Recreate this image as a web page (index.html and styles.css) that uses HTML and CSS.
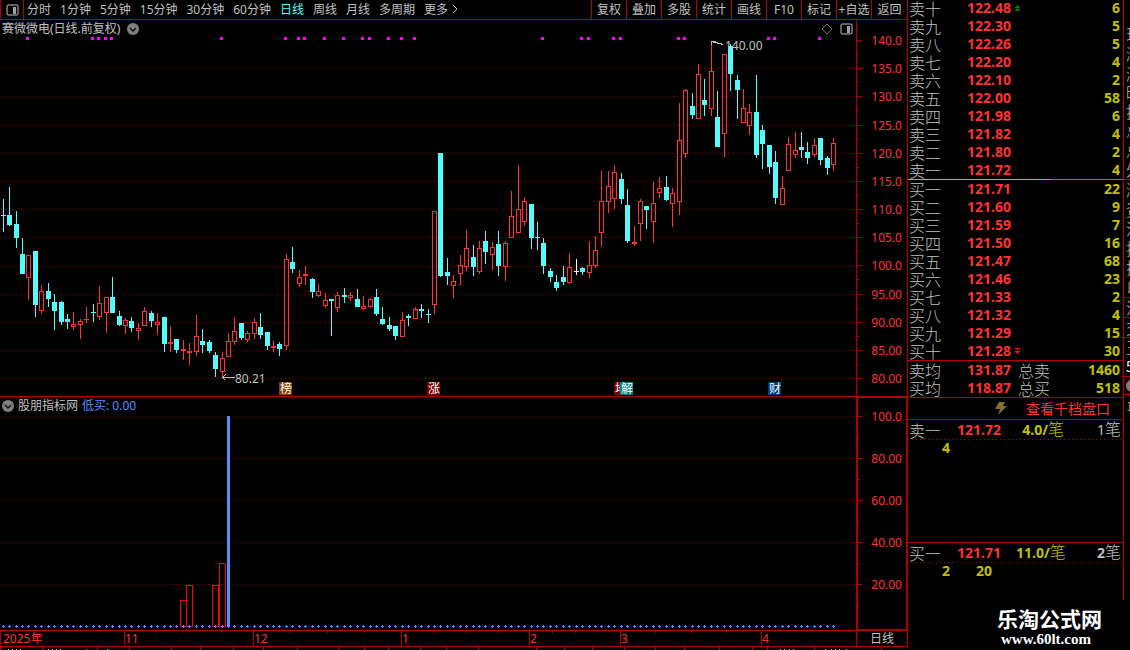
FILE: index.html
```html
<!DOCTYPE html>
<html lang="zh-CN">
<head>
<meta charset="UTF-8">
<meta name="viewport" content="width=device-width, initial-scale=1.0">
<title>赛微微电</title>
<link rel="stylesheet" href="styles.css">
</head>
<body>

<main class="main">
    <nav class="toolbar">
        <button class="panel-toggle" aria-label="侧栏">
            <svg width="13" height="12"><rect x="1" y="1" width="11" height="10" rx="2" fill="none" stroke="#808080" stroke-width="1.5"/><rect x="7" y="3" width="3" height="7" fill="#a0a0a0"/></svg>
        </button>
        <div class="periods">
            <button>分时</button>
            <button>1分钟</button>
            <button>5分钟</button>
            <button>15分钟</button>
            <button>30分钟</button>
            <button>60分钟</button>
            <button class="active">日线</button>
            <button>周线</button>
            <button>月线</button>
            <button>多周期</button>
            <button>更多 <svg width="8" height="10"><path d="M2 1l4 4-4 4" fill="none" stroke="#c0c0c0"/></svg></button>
        </div>
        <div class="tools">
            <button>复权</button>
            <button>叠加</button>
            <button>多股</button>
            <button>统计</button>
            <button>画线</button>
            <button>F10</button>
            <button>标记</button>
            <button>+自选</button>
            <button>返回</button>
        </div>
    </nav>

    <section class="pane">
        <div class="plot">
            <div class="pane-title">
                <span>赛微微电(日线.前复权)</span>
                <svg width="12" height="12"><circle cx="6" cy="6" r="6" fill="#808080"/><path d="M3 5l3 3 3-3" fill="none" stroke="#111" stroke-width="1.5"/></svg>
                <span class="spacer"></span>
                <svg width="12" height="12"><path d="M6 1l5 5-5 5-5-5z" fill="none" stroke="#707070"/></svg>
                <svg width="13" height="12"><rect x="1" y="1" width="11" height="10" rx="2" fill="none" stroke="#808080" stroke-width="1.5"/><rect x="7" y="3" width="3" height="7" fill="#a0a0a0"/></svg>
            </div>
            <svg id="kline" class="kline"></svg>
        </div>
        <svg id="price-axis" class="axis"></svg>
    </section>

    <section class="pane">
        <div class="plot">
            <div class="pane-title compact">
                <svg width="12" height="12"><circle cx="6" cy="6" r="6" fill="#808080"/><path d="M3 5l3 3 3-3" fill="none" stroke="#111" stroke-width="1.5"/></svg>
                <span>股朋指标网</span>
                <span class="blue">低买: 0.00</span>
            </div>
            <svg id="indicator" class="indicator"></svg>
        </div>
        <svg id="indicator-axis" class="axis axis-selected"></svg>
    </section>

    <footer class="timeline">
        <svg id="months" class="months"></svg>
        <div class="period-name">日线</div>
    </footer>
    <svg id="ruler" class="ruler"></svg>
</main>

<aside class="quotes">
    <table class="levels sell"><tbody id="sell"></tbody></table>
    <div class="ratio"><span class="ratio-sell"></span><span class="ratio-buy"></span></div>
    <table class="levels buy"><tbody id="buy"></tbody></table>
    <table class="levels totals">
        <tbody>
            <tr><th>卖均</th><td class="price">131.87</td><th>总卖</th><td class="volume">1460</td></tr>
            <tr><th>买均</th><td class="price">118.87</td><th>总买</th><td class="volume">518</td></tr>
        </tbody>
    </table>
    <div class="depth">
        <svg width="12" height="13"><path d="M4 0h6L8 4h4L3 13l2-6H0z" fill="#80702c"/></svg>
        <a href="#">查看千档盘口</a>
    </div>
    <section class="queue">
        <table class="levels">
            <tbody><tr><th>卖一</th><td class="price">121.72</td><td class="per">4.0/<span>笔</span></td><td class="count">1<span>笔</span></td></tr></tbody>
        </table>
        <div class="orders"><span>4</span></div>
    </section>
    <section class="queue last">
        <table class="levels">
            <tbody><tr><th>买一</th><td class="price">121.71</td><td class="per">11.0/<span>笔</span></td><td class="count"><b>2</b><span>笔</span></td></tr></tbody>
        </table>
        <div class="orders"><span>2</span><span>20</span></div>
    </section>
    <div class="site">
        <strong>乐淘公式网</strong>
        <span>www.60lt.com</span>
    </div>
</aside>

<aside class="strip">
    <div class="group first"><span>现</span><span>涨</span><span>涨</span><span>昨</span><span>换</span><span>总</span><span>总</span><span>外</span></div>
    <div class="group"><span>涨</span><span>资</span><span>流</span><span>换</span><span>换</span><span>以</span></div>
    <div class="group"><span>流</span></div>
    <div class="group"><span>交</span></div>
    <div class="group"><span>王</span><b>5</b></div>
    <div class="group dark"><svg width="12" height="12"><circle cx="6" cy="6" r="6" fill="#808080"/></svg></div>
    <div class="group end"><i>1</i></div>
</aside>

<script src="chart.js"></script>
</body>
</html>
```
FILE: styles.css
```css
* {
    box-sizing: border-box;
}

body {
    margin: 0;
    height: 100vh;
    display: flex;
    overflow: hidden;
    background-color: #000;
    color: #c0c0c0;
    font-family: "Noto Sans", "Noto Sans CJK SC", sans-serif;
    font-size: 12px;
}

svg {
    display: block;
    shape-rendering: crispEdges;
}

svg text {
    font-size: 12px;
    fill: #ff3232;
}

button {
    padding: 0;
    border: 0;
    background: none;
    color: inherit;
    font: inherit;
    line-height: 18px;
    white-space: nowrap;
    cursor: pointer;
}

button svg, .pane-title svg, .strip svg {
    shape-rendering: auto;
}

table {
    width: 100%;
    border-collapse: collapse;
    table-layout: fixed;
}

.main {
    flex: 1;
    min-width: 0;
}

/* toolbar */
.toolbar {
    display: flex;
    height: 20px;
    border-bottom: 1px solid #b00000;
    border-right: 1px solid #b00000;
}

.panel-toggle {
    display: flex;
    align-items: center;
    justify-content: center;
    width: 24px;
    border-left: 1px solid #b00000;
    border-right: 1px solid #b00000;
}

.periods {
    display: flex;
    flex: 1;
    gap: 9px;
    padding-left: 3px;
}

.periods svg {
    display: inline-block;
}

.active {
    color: #54fcfc;
}

.tools {
    display: flex;
}

.tools button {
    width: 35px;
    border-left: 1px solid #b00000;
}

.tools button:last-child {
    width: 36px;
}

/* charts */
.pane {
    display: flex;
}

.plot {
    flex: 1;
    min-width: 0;
    border-bottom: 1px solid #b00000;
}

.pane-title {
    display: flex;
    align-items: center;
    gap: 7px;
    height: 17px;
    padding: 0 3px 0 2px;
    line-height: 17px;
}

.pane-title.compact {
    gap: 4px;
}

.spacer {
    flex: 1;
}

.blue {
    color: #5090ff;
}

.kline {
    width: 100%;
    height: 359px;
}

.indicator {
    width: 100%;
    height: 216px;
}

.axis {
    width: 52px;
    height: 377px;
    border-left: 1px solid #b00000;
    border-right: 1px solid #b00000;
}

.axis-selected {
    height: 235px;
    margin-top: -1px;
    border: 2px solid #b00000;
}

svg .note {
    fill: #c0c0c0;
}

svg .badge {
    fill: #fff;
}

.timeline {
    display: flex;
    height: 16px;
    border-bottom: 1px solid #b00000;
}

.months {
    flex: 1;
    min-width: 0;
    height: 15px;
}

.period-name {
    width: 52px;
    border-left: 1px solid #b00000;
    border-right: 1px solid #b00000;
    line-height: 15px;
    text-align: center;
}

.ruler {
    width: 100%;
    height: 3px;
}

/* quotes */
.quotes {
    width: 216px;
    display: flex;
    flex-direction: column;
}

.quotes > :not(.site) {
    border-right: 1px solid #b00000;
}

.levels th, .levels td {
    height: 18px;
    padding: 0;
    line-height: 18px;
    text-align: left;
    vertical-align: middle;
    white-space: nowrap;
}

.levels th, .levels td span {
    font-family: "Noto Sans CJK SC", sans-serif;
    font-size: 16px;
    font-weight: 300;
}

.levels th {
    line-height: 16px;
}

.levels td span {
    line-height: 16px;
}

.levels th:first-child {
    width: 59px;
    padding-left: 1px;
}

.levels td {
    font-size: 14px;
    font-weight: bold;
}

.levels .price {
    width: 51px;
    color: #ff3232;
}

.levels .price svg {
    display: inline-block;
    vertical-align: 2px;
}

.levels .volume {
    padding-right: 3px;
    color: #c0c000;
    text-align: right;
}

.sell {
    margin-top: -1px;
}

.ratio {
    display: flex;
    height: 1px;
}

.ratio-sell {
    flex: 2;
    background-color: #e0a030;
}

.ratio-buy {
    flex: 1;
    background-color: #4080d0;
}

.totals {
    border-top: 1px solid #b00000;
}

.depth {
    display: flex;
    align-items: center;
    justify-content: flex-end;
    gap: 19px;
    height: 22px;
    padding-right: 13px;
    border-top: 1px solid #b00000;
}

.depth svg {
    shape-rendering: auto;
}

.depth a {
    color: #ff3232;
    font-size: 14px;
    line-height: 18px;
    text-decoration: none;
}

.queue {
    height: 123px;
    border-top: 1px solid #b00000;
}

.queue.last {
    height: 58px;
}

.queue .levels th {
    width: 49px;
}

.queue .levels .price {
    width: 59px;
}

.queue .levels .per {
    width: 48px;
    color: #c0c000;
    text-align: right;
}

.queue .levels .count {
    padding-right: 2px;
    font-weight: normal;
    text-align: right;
}

.orders {
    display: flex;
    background: repeating-linear-gradient(90deg, #b00000 0 1px, #000 1px 4px) top / 100% 1px no-repeat;
    color: #c0c000;
    font-size: 14px;
    font-weight: bold;
    line-height: 18px;
}

.orders span {
    width: 42px;
    text-align: right;
}

.site {
    padding: 6px 22px 0 0;
    color: #fff;
    text-align: right;
}

.site strong {
    display: block;
    font-family: "Noto Sans CJK SC", sans-serif;
    font-size: 21px;
    line-height: 24px;
}

.site span {
    display: block;
    padding-right: 11px;
    font-family: "Liberation Serif", serif;
    font-size: 15px;
    font-weight: bold;
    line-height: 18px;
}

/* next panel, cut off by the window edge */
.strip {
    width: 6px;
    overflow: hidden;
}

.group {
    display: flex;
    flex-direction: column;
    justify-content: space-around;
    width: 20px;
    min-height: 20px;
    padding-left: 2px;
    border-bottom: 1px solid #b00000;
    font-family: "Noto Sans CJK SC", sans-serif;
    font-size: 16px;
    font-weight: 300;
    line-height: 19px;
}

.group.first {
    height: 180px;
    padding-top: 25px;
}

.group:nth-child(2) {
    height: 118px;
}

.group b {
    color: #fff;
    font-size: 14px;
}

.group.dark {
    height: 18px;
    min-height: 0;
    background-color: #200000;
}

.group.end {
    border: 0;
}

.group i {
    font-size: 12px;
    font-style: normal;
}
```
FILE: chart.js
```js
const LINE = '#b00000';
const RED = '#ff3232';
const CYAN = '#54fcfc';

// high, body top, body bottom, low in pixel rows; r = up, c = down, w = flat
const candles = `
199 215 216 232 c|187 215 225 226 c|211 224 238 248 c|238 254 274 274 c|255 255 278 300 r
251 251 305 317 c|285 291 311 314 r|283 291 299 307 c|294 302 311 330 c|301 302 322 325 c
314 319 322 329 c|312 324 327 330 r|319 321 325 339 r|307 319 320 323 r|304 312 313 322 c
286 303 317 320 r|297 297 313 333 r|277 297 313 313 c|311 316 325 326 c|318 320 326 334 r
317 321 328 332 c|323 328 331 340 r|307 311 326 326 r|311 313 321 327 c|313 322 325 335 r
317 317 344 352 c|326 342 344 352 r|339 339 350 353 c|340 349 351 360 r|343 351 353 365 r
315 336 352 356 r|329 341 345 353 c|340 342 351 353 c|352 355 369 377 c|352 358 372 378 r
333 341 357 357 r|317 331 342 345 r|323 323 338 340 c|331 333 340 342 r|318 322 334 339 r
313 327 335 339 c|332 332 346 350 c|341 346 348 352 r|342 344 349 356 c|254 259 346 350 r
247 262 269 273 c|270 277 284 287 r|266 274 276 285 r|278 279 292 298 c|284 291 296 297 r
293 300 306 308 r|299 299 301 336 c|292 295 308 312 r|288 295 297 303 c|292 295 298 301 r
289 299 307 307 c|296 306 309 310 r|298 299 307 308 r|289 297 314 316 c|307 319 324 325 c
317 325 329 331 c|326 326 336 340 c|312 320 337 337 r|314 316 318 326 c|307 309 319 319 r
304 309 311 318 c|309 314 315 323 c|211 211 305 314 r|153 153 276 277 c|258 272 276 285 c
275 281 286 298 r|255 265 274 285 r|230 248 267 271 r|245 257 267 276 c|241 248 272 274 r
231 241 252 264 c|242 247 255 270 r|231 244 266 276 c|241 243 267 281 r|191 216 238 238 r
165 209 233 233 r|197 201 222 226 r|204 204 238 249 c|222 237 238 250 c|238 243 266 274 c
268 271 277 282 c|275 282 288 291 c|266 277 282 285 c|253 267 283 284 r|259 271 272 275 w
267 268 272 275 c|241 265 273 278 r|236 250 266 268 r|171 201 233 247 r|171 186 202 213 r
165 172 199 209 r|173 179 199 204 c|189 205 241 243 c|226 242 244 246 r|199 201 224 241 r
206 206 210 229 c|182 203 222 243 r|177 188 193 198 r|176 187 200 201 c|188 193 204 227 r
103 140 202 215 r|89 90 154 158 r|93 106 115 119 c|64 74 119 119 r|79 100 105 116 c
42 71 109 116 r|91 117 147 147 c|54 54 134 157 r|44 46 74 91 c|75 80 90 119 c
89 108 123 123 r|104 112 126 135 r|75 112 155 158 c|125 130 144 169 c|145 145 167 174 c
151 162 198 204 c|176 188 205 205 r|137 144 171 171 r|132 150 155 158 r|132 147 150 158 c
142 152 158 164 c|138 145 155 157 r|138 138 160 165 c|156 158 168 175 c|138 143 165 171 r
`.trim().split(/[|\n]/).map(c => c.split(' '));

const signals = [4, 14, 15, 16, 17, 34, 44, 46, 47, 50, 53, 56, 57, 60, 62, 64, 84,
    90, 91, 95, 96, 105, 106, 119, 120, 127];

const xOf = i => 3 + Math.floor(0.15 + 6.438 * i);

const rect = (x, y, w, h, fill) => `<rect x="${x}" y="${y}" width="${w}" height="${h}" fill="${fill}"/>`;
const box = (x, y, w, h, stroke) =>
    `<rect x="${x + 0.5}" y="${y + 0.5}" width="${w - 1}" height="${h - 1}" fill="none" stroke="${stroke}"/>`;
const text = (x, y, s, cls = '', anchor = 'start') =>
    `<text x="${x}" y="${y}" class="${cls}" text-anchor="${anchor}">${s}</text>`;
const gridLine = y =>
    `<line x1="1" x2="100%" y1="${y + 0.5}" y2="${y + 0.5}" stroke="#a00000" stroke-dasharray="1 3"/>`;

function put(id, top, content) {
    document.getElementById(id).innerHTML = `<g transform="translate(0 ${-top})">${content}</g>`;
}

function drawKline() {
    let out = '';
    [68, 96, 125, 153, 181, 209, 237, 266, 294, 322, 350, 378].forEach(y => out += gridLine(y));
    signals.forEach(i => out += rect(xOf(i) - 2, 37, 3, 3, '#ff00ff'));

    candles.forEach((c, i) => {
        const [high, top, bottom, low] = c.map(Number);
        const x = xOf(i);
        const color = { r: RED, c: CYAN, w: '#fff' }[c[4]];
        const hollow = c[4] === 'r' && bottom - top > 2;
        if (hollow) {
            out += rect(x, high, 1, top - high, color) + rect(x, bottom, 1, low - bottom, color);
            out += box(x - 2, top, 5, bottom - top, color);
        } else {
            out += rect(x, high, 1, low - high, color);
            out += rect(x - 2, top, 5, bottom - top, color);
        }
    });

    out += '<path d="M711.5 41.5l12 3M711.5 45v-4h4M222.5 377.5h12M222.5 377.5l3-3M222.5 377.5l3 3" fill="none" stroke="#c0c0c0"/>';
    out += text(725, 50, '140.00', 'note') + text(235, 383, '80.21', 'note');

    [[279, '榜', '#804000'], [427, '涨', '#800000'], [614, '地', '#800000'],
        [620, '解', '#008080'], [768, '财', '#003878']].forEach(([x, s, fill]) => {
        out += rect(x, 382, 13, 13, fill) + text(x + 1, 393, s, 'badge');
    });
    put('kline', 37, out);
}

function drawPriceAxis() {
    let out = '';
    for (let i = 0; i < 13; i++) {
        const y = 40 + Math.round(i * 28.17);
        const price = 140 - i * 5;
        out += rect(0, y, 5, 1, LINE);
        if (i < 12) out += rect(0, y + 14, 2, 1, LINE);
        out += text(45, y + 5, price < 100 ? price.toFixed(2) : price.toFixed(1), '', 'end');
    }
    put('price-axis', 20, out);
}

function drawIndicator() {
    let out = '';
    [416, 458, 500, 542, 584].forEach(y => out += gridLine(y));
    [[180, 600], [186, 585], [212, 585], [219, 563]].forEach(([x, y]) => {
        out += box(x, y, 7, 627 - y, '#ff0000');
    });
    candles.forEach((c, i) => {
        const x = xOf(i);
        out += rect(x - 1, 626, 3, 1, '#5090ff') + rect(x, 625, 1, 3, '#5090ff');
    });
    out += rect(227, 416, 3, 211, '#5090ff');
    put('indicator', 414, out);

    out = '';
    [100, 80, 60, 40, 20].forEach((v, i) => {
        const y = 416 + i * 42;
        out += rect(0, y, 4, 1, LINE) + rect(0, y + 21, 2, 1, LINE);
        out += text(44, y + 5, v.toFixed(2).slice(0, 5), '', 'end');
    });
    put('indicator-axis', 398, out);
}

function drawTimeline() {
    let out = '';
    [[0, '2025年'], [124, '11'], [253, '12'], [401, '1'], [529, '2'], [620, '3'], [761, '4']].forEach(([x, s]) => {
        out += rect(x, 0, 1, 15, LINE) + text(x + (x ? 1 : 3), 12, s);
    });
    [156, 189, 221, 290, 327, 364, 433, 465, 497, 552, 575, 597, 655, 691, 726].forEach(x => {
        out += rect(x, 0, 1, 2, LINE);
    });
    put('months', 0, out);

    out = '';
    [0, 42, 97, 129, 171, 200, 233, 263, 297, 338, 364, 388, 420, 446, 478, 536, 564, 592,
        624, 655, 684, 719, 752, 767, 814, 881].forEach(x => out += rect(x, 0, 1, 3, LINE));
    [8, 12, 16, 20, 107, 780, 784, 789, 793, 825, 831, 835, 839, 846].forEach(x => out += rect(x, 2, 1, 1, '#c0c0c0'));
    [48, 52, 56, 60, 86].forEach(x => out += rect(x, 2, 1, 1, '#c0c000'));
    put('ruler', 0, out);
}

const sell = [['十', '122.48', 6], ['九', '122.30', 5], ['八', '122.26', 5], ['七', '122.20', 4], ['六', '122.10', 2],
    ['五', '122.00', 58], ['四', '121.98', 6], ['三', '121.82', 4], ['二', '121.80', 2], ['一', '121.72', 4]];
const buy = [['一', '121.71', 22], ['二', '121.60', 9], ['三', '121.59', 7], ['四', '121.50', 16], ['五', '121.47', 68],
    ['六', '121.46', 23], ['七', '121.33', 2], ['八', '121.32', 4], ['九', '121.29', 15], ['十', '121.28', 30]];
const marks = {
    '122.48': '<path d="M2 0h1v1h1v1h1v1H3v1h1v1h1v1H0V5h1V4h1V3H0V2h1V1h1z" fill="#008000"/>',
    '121.28': '<path d="M0 0h5v1H3v2h2v1H4v1H3v1H2V5H1V4H0V3h2V1H0z" fill="#ff0000"/>'
};

function fillLevels(id, side, rows) {
    document.getElementById(id).innerHTML = rows.map(([n, price, volume]) => `
        <tr>
            <th>${side}${n}</th>
            <td class="price">${price}${marks[price] ? ` <svg width="5" height="6">${marks[price]}</svg>` : ''}</td>
            <td class="volume">${volume}</td>
        </tr>`).join('');
}

drawKline();
drawPriceAxis();
drawIndicator();
drawTimeline();
fillLevels('sell', '卖', sell);
fillLevels('buy', '买', buy);
```
